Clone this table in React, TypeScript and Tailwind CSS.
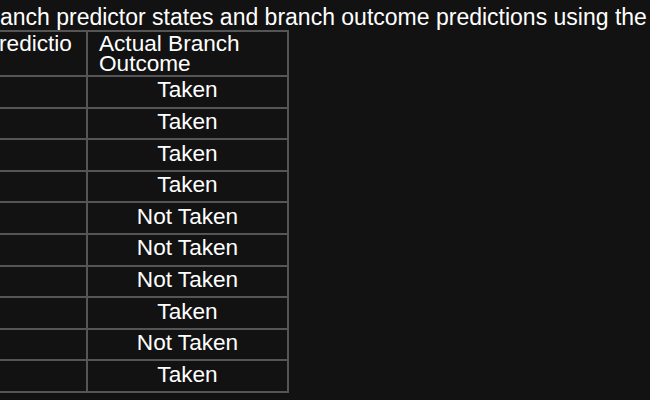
import React from "react";

const outcomes = [
  "Taken",
  "Taken",
  "Taken",
  "Taken",
  "Not Taken",
  "Not Taken",
  "Not Taken",
  "Taken",
  "Not Taken",
  "Taken",
];

export default function App() {
  return (
    <div className="w-[650px] h-[400px] overflow-hidden bg-[#121212] text-white font-['Liberation_Sans',Arial,sans-serif] text-[22.6px]">
      <div className="h-[30px] pt-[4px] ml-[-20.5px] whitespace-nowrap text-[23px] leading-[26px] overflow-hidden">
        branch predictor states and branch outcome predictions using the
      </div>
      <table className="table-fixed w-[318px] ml-[-29px] border-separate border-spacing-0 border border-[#555555]">
        <thead>
          <tr>
            <th className="w-[115px] border border-[#555555] px-[11px] pt-[2px] pb-[2px] text-left font-normal leading-[19.5px] align-top break-all">
              Prediction
            </th>
            <th className="w-[201px] border border-[#555555] px-[11px] pt-[2px] pb-[2px] text-left font-normal leading-[19.5px] align-top">
              Actual Branch Outcome
            </th>
          </tr>
        </thead>
        <tbody>
          {outcomes.map((o, i) => (
            <tr key={i}>
              <td className="h-[31.6px] border border-[#555555] p-0"></td>
              <td className="h-[31.6px] border border-[#555555] px-[11px] pt-0 pb-[3px] text-center align-middle leading-[25.85px] whitespace-nowrap">
                {o}
              </td>
            </tr>
          ))}
        </tbody>
      </table>
    </div>
  );
}
